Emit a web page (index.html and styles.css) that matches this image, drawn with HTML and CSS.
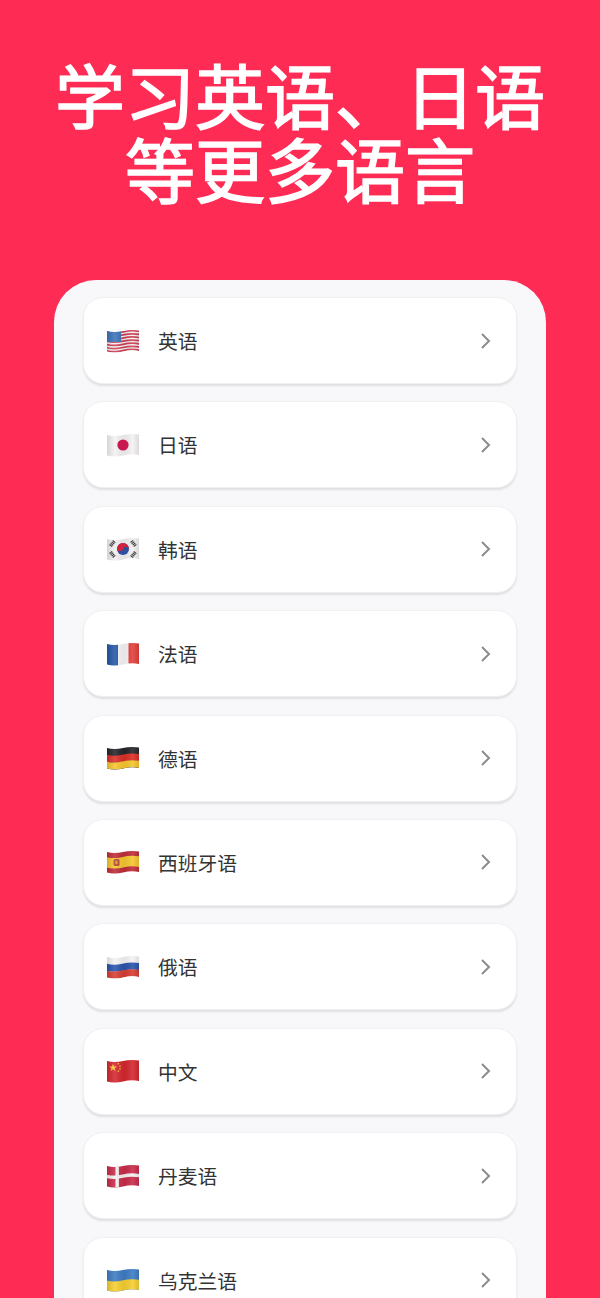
FILE: index.html
```html
<!DOCTYPE html>
<html lang="zh-CN">
<head>
    <meta charset="UTF-8">
    <title>学习英语、日语等更多语言</title>
    <link rel="stylesheet" href="styles.css">
</head>
<body>

    <svg class="flag-defs" width="0" height="0" aria-hidden="true">
        <defs>
            <clipPath id="flag-clip">
                <path d="M0 2C5 3.6 11 3.2 16 2C21 .8 27 .4 32 1.6V22C27 20.8 21 21.2 16 22.4C11 23.6 5 24 0 22.4Z"/>
            </clipPath>
            <path id="wave" d="M-1 0C5 1.6 11 1.2 16 0C21 -1.2 27 -1.6 33 -.4"/>
            <linearGradient id="fold" x1="0" x2="1" y1="0" y2="0">
                <stop offset="0" stop-color="#000" stop-opacity=".12"/>
                <stop offset=".25" stop-color="#fff" stop-opacity=".12"/>
                <stop offset=".55" stop-color="#000" stop-opacity=".06"/>
                <stop offset=".8" stop-color="#fff" stop-opacity=".1"/>
                <stop offset="1" stop-color="#000" stop-opacity=".1"/>
            </linearGradient>
        </defs>
    </svg>

    <h1 class="title">学习英语、日语<br>等更多语言</h1>

    <div class="panel">

        <div class="row">
            <svg class="flag" viewBox="0 0 32 24">
                <g clip-path="url(#flag-clip)">
                    <rect width="32" height="24" fill="#f6f3f3"/>
                    <g fill="none" stroke="#cf3f55" stroke-width="1.7">
                        <use href="#wave" y="2.8"/>
                        <use href="#wave" y="5.94"/>
                        <use href="#wave" y="9.08"/>
                        <use href="#wave" y="12.2"/>
                        <use href="#wave" y="15.36"/>
                        <use href="#wave" y="18.5"/>
                        <use href="#wave" y="21.6"/>
                    </g>
                    <rect width="14" height="13" fill="#3d74b8"/>
                    <rect width="32" height="24" fill="url(#fold)"/>
                </g>
            </svg>
            <span class="name">英语</span>
            <svg class="arrow" viewBox="0 0 12 18"><path d="M2 2l7 7-7 7"/></svg>
        </div>

        <div class="row">
            <svg class="flag" viewBox="0 0 32 24">
                <g clip-path="url(#flag-clip)">
                    <rect width="32" height="24" fill="#f4f2f2"/>
                    <rect width="32" height="24" fill="url(#fold)"/>
                    <circle cx="16" cy="12" r="5.6" fill="#c9174f"/>
                </g>
            </svg>
            <span class="name">日语</span>
            <svg class="arrow" viewBox="0 0 12 18"><path d="M2 2l7 7-7 7"/></svg>
        </div>

        <div class="row">
            <svg class="flag" viewBox="0 0 32 24">
                <g clip-path="url(#flag-clip)">
                    <rect width="32" height="24" fill="#f2f0f0"/>
                    <rect width="32" height="24" fill="url(#fold)"/>
                    <circle cx="16" cy="12" r="6" fill="#2d4f9e"/>
                    <path d="M10.2 10.4A6 6 0 0 1 21.8 13.6A3 3 0 0 0 16 12A3 3 0 0 1 10.2 10.4Z" fill="#d0233f"/>
                    <g stroke="#3b3b3f" stroke-width="3.4" stroke-dasharray="1.1 .6">
                        <path d="M3.5 9L7.5 4"/>
                        <path d="M24.5 4L28.5 9"/>
                        <path d="M3.5 15L7.5 20"/>
                        <path d="M24.5 20L28.5 15"/>
                    </g>
                </g>
            </svg>
            <span class="name">韩语</span>
            <svg class="arrow" viewBox="0 0 12 18"><path d="M2 2l7 7-7 7"/></svg>
        </div>

        <div class="row">
            <svg class="flag" viewBox="0 0 32 24">
                <g clip-path="url(#flag-clip)">
                    <rect width="11" height="24" fill="#2458a6"/>
                    <rect x="11" width="10.5" height="24" fill="#f6f4f4"/>
                    <rect x="21.5" width="10.5" height="24" fill="#e2403c"/>
                    <rect width="32" height="24" fill="url(#fold)"/>
                </g>
            </svg>
            <span class="name">法语</span>
            <svg class="arrow" viewBox="0 0 12 18"><path d="M2 2l7 7-7 7"/></svg>
        </div>

        <div class="row">
            <svg class="flag" viewBox="0 0 32 24">
                <g clip-path="url(#flag-clip)">
                    <rect width="32" height="24" fill="#26262a"/>
                    <g fill="none" stroke-width="7">
                        <use href="#wave" y="12.2" stroke="#dc2f26"/>
                        <use href="#wave" y="19" stroke="#f7c52e"/>
                    </g>
                    <rect width="32" height="24" fill="url(#fold)"/>
                </g>
            </svg>
            <span class="name">德语</span>
            <svg class="arrow" viewBox="0 0 12 18"><path d="M2 2l7 7-7 7"/></svg>
        </div>

        <div class="row">
            <svg class="flag" viewBox="0 0 32 24">
                <g clip-path="url(#flag-clip)">
                    <rect width="32" height="24" fill="#bf2d3a"/>
                    <use href="#wave" y="12.2" fill="none" stroke="#f6c62f" stroke-width="10.4"/>
                    <rect x="6.5" y="9" width="6" height="7" rx="1.5" fill="#b8452e"/>
                    <rect x="8.4" y="10.8" width="2.2" height="3.2" fill="#dd9a38"/>
                    <rect width="32" height="24" fill="url(#fold)"/>
                </g>
            </svg>
            <span class="name">西班牙语</span>
            <svg class="arrow" viewBox="0 0 12 18"><path d="M2 2l7 7-7 7"/></svg>
        </div>

        <div class="row">
            <svg class="flag" viewBox="0 0 32 24">
                <g clip-path="url(#flag-clip)">
                    <rect width="32" height="24" fill="#f5f3f3"/>
                    <g fill="none" stroke-width="7">
                        <use href="#wave" y="12.2" stroke="#2a54ab"/>
                        <use href="#wave" y="19" stroke="#d63e35"/>
                    </g>
                    <rect width="32" height="24" fill="url(#fold)"/>
                </g>
            </svg>
            <span class="name">俄语</span>
            <svg class="arrow" viewBox="0 0 12 18"><path d="M2 2l7 7-7 7"/></svg>
        </div>

        <div class="row">
            <svg class="flag" viewBox="0 0 32 24">
                <g clip-path="url(#flag-clip)">
                    <rect width="32" height="24" fill="#d5272f"/>
                    <polygon points="6,4.6 7,7.4 10,7.4 7.6,9.2 8.5,12 6,10.3 3.5,12 4.4,9.2 2,7.4 5,7.4" fill="#f7c93b"/>
                    <g fill="#f7c93b">
                        <circle cx="11.4" cy="4.8" r=".8"/>
                        <circle cx="13" cy="7.2" r=".8"/>
                        <circle cx="13" cy="10" r=".8"/>
                        <circle cx="11.4" cy="12.2" r=".8"/>
                    </g>
                    <rect width="32" height="24" fill="url(#fold)"/>
                </g>
            </svg>
            <span class="name">中文</span>
            <svg class="arrow" viewBox="0 0 12 18"><path d="M2 2l7 7-7 7"/></svg>
        </div>

        <div class="row">
            <svg class="flag" viewBox="0 0 32 24">
                <g clip-path="url(#flag-clip)">
                    <rect width="32" height="24" fill="#c92c4a"/>
                    <use href="#wave" y="12.2" fill="none" stroke="#f5f1f1" stroke-width="3.4"/>
                    <rect x="8.5" width="3.4" height="24" fill="#f5f1f1"/>
                    <rect width="32" height="24" fill="url(#fold)"/>
                </g>
            </svg>
            <span class="name">丹麦语</span>
            <svg class="arrow" viewBox="0 0 12 18"><path d="M2 2l7 7-7 7"/></svg>
        </div>

        <div class="row">
            <svg class="flag" viewBox="0 0 32 24">
                <g clip-path="url(#flag-clip)">
                    <rect width="32" height="24" fill="#3f7cc4"/>
                    <use href="#wave" y="17.6" fill="none" stroke="#f6cf31" stroke-width="10.4"/>
                    <rect width="32" height="24" fill="url(#fold)"/>
                </g>
            </svg>
            <span class="name">乌克兰语</span>
            <svg class="arrow" viewBox="0 0 12 18"><path d="M2 2l7 7-7 7"/></svg>
        </div>

    </div>

</body>
</html>
```

FILE: styles.css
```css
html, body {
    height: 1298px;
    overflow: hidden;
}
body {
    margin: 0;
    background-color: #fe2c55;
    font-family: "Noto Sans CJK SC", "Noto Sans", sans-serif;
}
.flag-defs {
    display: block;
}
.title {
    margin: 0;
    padding-top: 57px;
    color: white;
    font-size: 70px;
    font-weight: 400;
    line-height: 74px;
    text-align: center;
    white-space: nowrap;
    -webkit-text-stroke: 1.6px white;
}
.panel {
    display: flex;
    flex-direction: column;
    gap: 17.4px;
    margin: 75px 54px 0;
    padding: 17px 29px 0;
    background-color: #f8f8fb;
    border-radius: 42px 42px 0 0;
}
.row {
    display: flex;
    flex-shrink: 0;
    align-items: center;
    box-sizing: border-box;
    height: 87px;
    padding: 0 24px 0 23px;
    background-color: white;
    border: 1px solid #f0f0f3;
    border-radius: 20px;
    box-shadow: 0 2px 2px #e0e0e4;
}
.flag {
    width: 32px;
    height: 24px;
    flex-shrink: 0;
}
.name {
    margin-left: 19px;
    color: #333;
    font-size: 19.8px;
}
.arrow {
    width: 12px;
    height: 18px;
    margin-left: auto;
    fill: none;
    stroke: #8c8c8c;
    stroke-width: 2;
}
```
